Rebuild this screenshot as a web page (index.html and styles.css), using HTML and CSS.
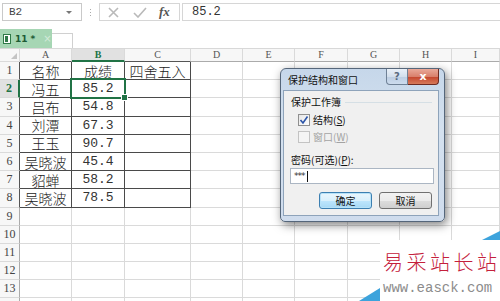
FILE: index.html
```html
<!DOCTYPE html>
<html lang="zh-CN">
<head>
<meta charset="utf-8">
<link rel="stylesheet" href="styles.css">
</head>
<body>
<div class="fbar">
  <div class="namebox"><span>B2</span><span class="dd"></span></div>
  <div class="dots"><i></i><i></i><i></i></div>
  <div class="fbtns">
    <svg class="ic-x" width="11" height="11" viewBox="0 0 11 11"><path d="M1 1L10 10M10 1L1 10" stroke="#b9b9b9" stroke-width="1.6" fill="none"/></svg>
    <svg class="ic-ok" width="14" height="11" viewBox="0 0 14 11"><path d="M1 6L5 10L13 1" stroke="#b9b9b9" stroke-width="1.6" fill="none"/></svg>
    <span class="fx">fx</span>
  </div>
  <div class="finput">85.2</div>
</div>

<div class="tabs">
  <div class="tab">
    <svg width="8" height="10" viewBox="0 0 8 10"><rect x="0.5" y="0.5" width="7" height="9" fill="#fff" stroke="#2f7a48"/><rect x="2" y="2" width="3" height="6" fill="#2f7a48"/></svg>
    <span class="tname">11</span><span class="star">*</span><span class="tx">×</span>
  </div>
  <div class="newtab"></div>
</div>

<div class="sheet">
  <div class="corner"><span class="tri"></span></div>
  <div class="ch tt">A</div><div class="ch on">B</div><div class="ch tt">C</div><div class="ch">D</div><div class="ch">E</div><div class="ch">F</div><div class="ch">G</div><div class="ch">H</div><div class="ch">I</div>

  <div class="rh tb">1</div><div class="c t">名称</div><div class="c t">成绩</div><div class="c t">四舍五入</div><div class="c"></div><div class="c"></div><div class="c"></div><div class="c"></div><div class="c"></div><div class="c"></div>
  <div class="rh tb on">2</div><div class="c t">冯五</div><div class="c t n cur">85.2<span class="sel"></span></div><div class="c t"></div><div class="c"></div><div class="c"></div><div class="c"></div><div class="c"></div><div class="c"></div><div class="c"></div>
  <div class="rh tb">3</div><div class="c t">吕布</div><div class="c t n">54.8</div><div class="c t"></div><div class="c"></div><div class="c"></div><div class="c"></div><div class="c"></div><div class="c"></div><div class="c"></div>
  <div class="rh tb">4</div><div class="c t">刘潭</div><div class="c t n">67.3</div><div class="c t"></div><div class="c"></div><div class="c"></div><div class="c"></div><div class="c"></div><div class="c"></div><div class="c"></div>
  <div class="rh tb">5</div><div class="c t">王玉</div><div class="c t n">90.7</div><div class="c t"></div><div class="c"></div><div class="c"></div><div class="c"></div><div class="c"></div><div class="c"></div><div class="c"></div>
  <div class="rh tb">6</div><div class="c t">吴晓波</div><div class="c t n">45.4</div><div class="c t"></div><div class="c"></div><div class="c"></div><div class="c"></div><div class="c"></div><div class="c"></div><div class="c"></div>
  <div class="rh tb">7</div><div class="c t">貂蝉</div><div class="c t n">58.2</div><div class="c t"></div><div class="c"></div><div class="c"></div><div class="c"></div><div class="c"></div><div class="c"></div><div class="c"></div>
  <div class="rh tb">8</div><div class="c t">吴晓波</div><div class="c t n">78.5</div><div class="c t"></div><div class="c"></div><div class="c"></div><div class="c"></div><div class="c"></div><div class="c"></div><div class="c"></div>
  <div class="rh">9</div><div class="c"></div><div class="c"></div><div class="c"></div><div class="c"></div><div class="c"></div><div class="c"></div><div class="c"></div><div class="c"></div><div class="c"></div>
  <div class="rh">10</div><div class="c"></div><div class="c"></div><div class="c"></div><div class="c"></div><div class="c"></div><div class="c"></div><div class="c"></div><div class="c"></div><div class="c"></div>
  <div class="rh">11</div><div class="c"></div><div class="c"></div><div class="c"></div><div class="c"></div><div class="c"></div><div class="c"></div><div class="c"></div><div class="c"></div><div class="c"></div>
  <div class="rh">12</div><div class="c"></div><div class="c"></div><div class="c"></div><div class="c"></div><div class="c"></div><div class="c"></div><div class="c"></div><div class="c"></div><div class="c"></div>
  <div class="rh">13</div><div class="c"></div><div class="c"></div><div class="c"></div><div class="c"></div><div class="c"></div><div class="c"></div><div class="c"></div><div class="c"></div><div class="c"></div>
  <div class="rh"></div><div class="c"></div><div class="c"></div><div class="c"></div><div class="c"></div><div class="c"></div><div class="c"></div><div class="c"></div><div class="c"></div><div class="c"></div>
</div>

<div class="dialog">
  <div class="titlebar">
    <span class="title">保护结构和窗口</span>
    <span class="cap help">?</span><span class="cap close">x</span>
  </div>
  <div class="client">
    <div class="group"><span>保护工作簿</span><span class="gline"></span></div>
    <div class="chk"><span class="box"><svg width="10" height="10" viewBox="0 0 10 10"><path d="M1.5 5L4 8L8.5 1.5" stroke="#2b54a8" stroke-width="1.6" fill="none"/></svg></span><span>结构(<u>S</u>)</span></div>
    <div class="chk off"><span class="box"></span><span>窗口(<u>W</u>)</span></div>
    <div class="lbl">密码(可选)(<u>P</u>):</div>
    <div class="input"><span class="pw">***</span><span class="caret"></span></div>
    <div class="btns"><span class="btn def">确定</span><span class="btn">取消</span></div>
  </div>
</div>

<div class="wm">
  <svg class="tri-a" width="18" height="9" viewBox="0 0 18 9"><path d="M0 9L18 0L18 9Z" fill="#3da3dc"/></svg>
  <svg class="tri-b" width="21" height="13" viewBox="0 0 21 13"><path d="M0 13L21 0L21 13Z" fill="#3da3dc"/></svg>
  <div class="wm-cn">易采站长站</div>
  <div class="wm-en">www.easck.com</div>
</div>
</body>
</html>
```

FILE: styles.css
```css
body {
  margin: 0;
  width: 500px;
  height: 301px;
  overflow: hidden;
  background: #fff;
  position: relative;
  font-family: "Noto Sans CJK SC", sans-serif;
}

/* formula bar */
.fbar {
  display: flex;
  height: 18px;
  margin-top: 3px;
  padding-left: 2px;
}
.namebox {
  width: 80px;
  box-sizing: border-box;
  border: 1px solid #c9c9c9;
  display: flex;
  align-items: center;
  justify-content: space-between;
  padding: 0 9px 0 6px;
  font: 11px "Liberation Mono", monospace;
  color: #444;
}
.dd {
  width: 0;
  height: 0;
  border-left: 3px solid transparent;
  border-right: 3px solid transparent;
  border-top: 3px solid #777;
}
.dots {
  width: 17px;
  display: flex;
  flex-direction: column;
  align-items: center;
  justify-content: center;
  gap: 2px;
}
.dots i {
  width: 1px;
  height: 1px;
  background: #aaa;
}
.fbtns {
  width: 81px;
  box-sizing: border-box;
  border: 1px solid #d6d6d6;
  display: flex;
  align-items: center;
  padding-left: 8px;
}
.ic-ok { margin-left: 14px; }
.fx {
  margin-left: 12px;
  font: italic bold 13px "Liberation Serif", serif;
  color: #555;
}
.finput {
  flex: 1;
  margin-left: 2px;
  border: 1px solid #d6d6d6;
  border-right: 0;
  padding-left: 9px;
  font: 12px/16px "Liberation Mono", monospace;
  color: #333;
}

/* tabs */
.tabs {
  display: flex;
  height: 19px;
  margin-top: 8px;
}
.tab {
  width: 52px;
  box-sizing: border-box;
  background: #a6d6b4;
  display: flex;
  align-items: center;
  padding-left: 3px;
  color: #1d5b35;
}
.tname {
  margin-left: 4px;
  font: bold 9px "DejaVu Sans", sans-serif;
}
.star {
  margin-left: 3px;
  font: bold 9px "DejaVu Sans", sans-serif;
}
.tx {
  margin-left: 8px;
  font: 10px "DejaVu Sans", sans-serif;
  color: #d2ead9;
}
.newtab {
  width: 20px;
  margin-top: 4px;
  border: 1px solid #d0d0d0;
  border-left: 0;
  border-bottom: 0;
}

/* sheet */
.sheet {
  display: grid;
  grid-template-columns: 20px 52px 53px 66px 52px 52px 53px 52px 52px 1fr;
  grid-template-rows: 13px;
  grid-auto-rows: 18.2px;
  border-top: 1px solid #d8d8d8;
}
.sheet > div {
  box-sizing: border-box;
  border-right: 1px solid #dadada;
  border-bottom: 1px solid #dadada;
}
.corner {
  background: #f7f7f7;
  position: relative;
}
.tri {
  position: absolute;
  right: 2px;
  bottom: 2px;
  width: 0;
  height: 0;
  border-left: 6px solid transparent;
  border-bottom: 6px solid #c4c4c4;
}
.sheet .ch {
  background: #f7f7f7;
  border-bottom-color: #ababab;
  font: 10px/12px "Liberation Serif", serif;
  color: #555;
  text-align: center;
}
.sheet .ch.tt { border-bottom-color: #555; }
.sheet .ch.on {
  background: #e1e1e1;
  color: #217346;
  font-weight: bold;
  border-bottom: 2px solid #217346;
}
.sheet .rh {
  background: #f7f7f7;
  border-right-color: #ababab;
  font: 12px "Liberation Serif", serif;
  color: #444;
  display: flex;
  align-items: center;
  justify-content: center;
}
.sheet .rh.tb { border-right-color: #555; }
.sheet .rh.on {
  background: #e1e1e1;
  color: #217346;
  font-weight: bold;
  border-right: 2px solid #217346;
}
.c {
  font-size: 14px;
  font-weight: 300;
  color: #1a1a1a;
  display: flex;
  align-items: center;
  justify-content: center;
  line-height: 1;
}
.sheet .c.t {
  border-right-color: #4a4a4a;
  border-bottom-color: #4a4a4a;
}
.c.n {
  font: 13px "Liberation Mono", monospace;
  color: #333;
}
.cur { position: relative; }
.sel {
  position: absolute;
  left: -2px;
  top: -2px;
  right: -2px;
  bottom: -2px;
  border: 2px solid #217346;
}
.sel::after {
  content: "";
  position: absolute;
  right: -4px;
  bottom: -4px;
  width: 5px;
  height: 5px;
  background: #217346;
  border: 1px solid #fff;
}

/* dialog */
.dialog {
  position: absolute;
  left: 280px;
  top: 68px;
  width: 165px;
  height: 154px;
  box-sizing: border-box;
  border: 1px solid #55667a;
  border-radius: 6px 6px 5px 5px;
  background: linear-gradient(180deg, #c6d7ea 0%, #d4e1ef 40%, #cfdced 100%);
  box-shadow: 2px 3px 10px rgba(0, 0, 0, 0.5);
  padding: 0 5px 5px 2px;
  display: flex;
  flex-direction: column;
}
.titlebar {
  height: 21px;
  display: flex;
  align-items: flex-start;
}
.title {
  padding: 4px 0 0 5px;
  font-size: 10px;
  line-height: 14px;
  color: #111;
}
.cap {
  height: 16px;
  box-sizing: border-box;
  display: flex;
  align-items: center;
  justify-content: center;
}
.help {
  margin-left: auto;
  width: 22px;
  border: 1px solid #6f8196;
  border-top: 0;
  border-radius: 0 0 0 4px;
  background: linear-gradient(180deg, #e9f0f8 0%, #d3dfec 50%, #bccde2 51%, #cddcee 100%);
  font: bold 10px "DejaVu Sans", sans-serif;
  color: #5a6b80;
}
.close {
  width: 31px;
  border: 1px solid #6e2b22;
  border-top: 0;
  border-left: 0;
  border-radius: 0 0 4px 0;
  background: linear-gradient(180deg, #e9a999 0%, #d9806c 50%, #c4442c 51%, #d67a5a 100%);
  font: bold 11px "DejaVu Sans", sans-serif;
  color: #fff;
}
.client {
  flex: 1;
  background: #f0f0f0;
  border: 1px solid #8ea3ba;
  display: flex;
  flex-direction: column;
  font-size: 10px;
  color: #111;
}
.group {
  margin: 4px 6px 0 7px;
  height: 14px;
  display: flex;
  align-items: center;
  line-height: 14px;
}
.gline {
  flex: 1;
  margin-left: 4px;
  border-top: 1px solid #d5dfe5;
}
.chk {
  height: 14px;
  margin: 4px 0 0 14px;
  display: flex;
  align-items: center;
  gap: 3px;
  line-height: 14px;
}
.chk + .chk { margin-top: 3px; }
.box {
  width: 12px;
  height: 12px;
  box-sizing: border-box;
  border: 1px solid #8f8f8f;
  background: linear-gradient(135deg, #e6e6e6, #fdfdfd);
  display: flex;
  align-items: center;
  justify-content: center;
}
.chk.off { color: #a3a3a3; }
.chk.off .box {
  border-color: #c3c3c3;
  background: #f4f4f4;
}
.lbl {
  margin: 9px 0 0 7px;
  height: 14px;
  line-height: 14px;
}
.input {
  margin: 1px 4px 0 6px;
  height: 16px;
  box-sizing: border-box;
  background: #fff;
  border: 1px solid #abb6c3;
  display: flex;
  align-items: center;
  padding-left: 3px;
}
.pw {
  font: 9px "DejaVu Sans", sans-serif;
  color: #333;
  letter-spacing: -1px;
}
.caret {
  width: 1px;
  height: 11px;
  margin-left: 2px;
  background: #111;
}
.btns {
  margin: 8px 6px 0 0;
  display: flex;
  justify-content: flex-end;
  gap: 7px;
}
.btn {
  width: 53px;
  height: 17px;
  box-sizing: border-box;
  border: 1px solid #707070;
  border-radius: 3px;
  background: linear-gradient(180deg, #f2f2f2 0%, #ebebeb 50%, #dddddd 51%, #cfcfcf 100%);
  display: flex;
  align-items: center;
  justify-content: center;
  font-size: 10px;
}
.btn.def {
  border-color: #3c7fb1;
  background: linear-gradient(180deg, #eaf6fd 0%, #d9f0fc 50%, #bee6fd 51%, #a7d9f5 100%);
  box-shadow: inset 0 0 0 1px #b7e2f8;
}

/* watermark */
.wm {
  position: absolute;
  left: 380px;
  top: 240px;
  width: 120px;
  height: 61px;
  background: #fff;
}
.tri-a {
  position: absolute;
  right: 0;
  top: -9px;
}
.tri-b {
  position: absolute;
  left: -21px;
  bottom: 0;
}
.wm-cn {
  margin: 10px 0 0 3px;
  font-size: 20px;
  font-weight: 300;
  line-height: 24px;
  letter-spacing: 3.5px;
  color: #c4203b;
  white-space: nowrap;
}
.wm-en {
  margin: 6px 0 0 3px;
  font: 14px/16px "Liberation Mono", monospace;
  color: #8c8c8c;
  white-space: nowrap;
}
```
